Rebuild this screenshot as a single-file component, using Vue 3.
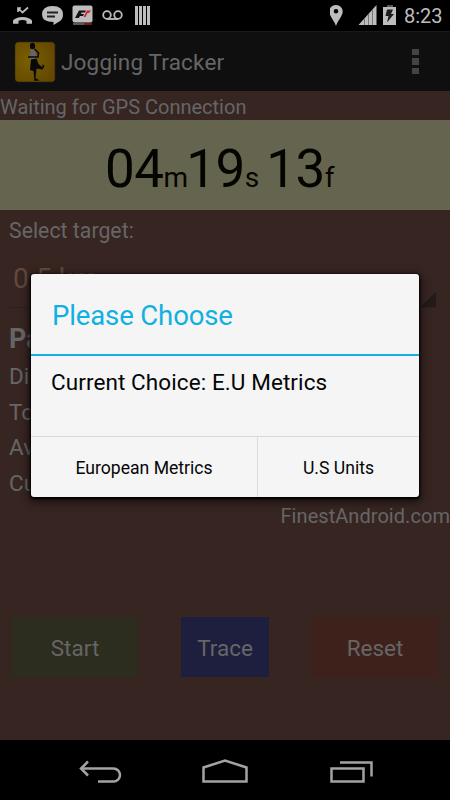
<script setup>
const stats = ['Distance', 'Total time', 'Average speed', 'Current speed']
const digits = [
  { value: '04', unit: 'm', cls: 'minutes' },
  { value: '19', unit: 's', cls: 'seconds' },
  { value: '13', unit: 'f', cls: 'fractions' },
]
</script>

<template>
  <div class="phone">
    <header class="status">
      <svg class="left-icons" width="160" height="31" viewBox="0 0 160 31">
        <g fill="#bdbdbd">
          <path d="M13 22.8V20.5Q16 17 22.500 17Q29 17 32 20.500V23.700H26.500V20.700Q22.500 19.500 18.500 20.700V23.700H13Z" />
          <path d="M42 14.500Q42 6 52.500 6Q63 6 63 14.500Q63 20 58.500 22L53.500 25V22Q42 22 42 14.500Z" />
          <rect x="72.500" y="5.500" width="20" height="17" rx="2" />
          <path d="M135 6h3v19h-3zM139 6h3v19h-3zM143 6h3v19h-3zM147 6h3v19h-3z" />
        </g>
        <path d="M18 12V8H21M18 8L22.500 12.500L28 7.500" fill="none" stroke="#bdbdbd" stroke-width="1.700" />
        <path d="M47 12.500H58M47 16.500H55" stroke="#222" stroke-width="1.800" />
        <path d="M75 18L79 10.500H86L85 12.500H81.500L81 14H84L83 16H80L78.800 18Z" fill="#111" />
        <path d="M83.500 17L87 10.500H91L89 13H87.500L85.500 17Z" fill="#d32228" />
        <path d="M73 24H84" stroke="#777" stroke-width="1.500" />
        <path d="M84 24H92" stroke="#a32020" stroke-width="1.500" />
        <g fill="none" stroke="#bdbdbd" stroke-width="1.800">
          <circle cx="107" cy="15" r="3.800" />
          <circle cx="118" cy="15" r="3.800" />
          <path d="M107 19H118" />
        </g>
      </svg>
      <div class="status-right">
        <svg width="80" height="31" viewBox="0 0 80 31">
          <path fill="#bdbdbd" fill-rule="evenodd" d="M6 5C10 5 12.700 8 12.700 11.500C12.700 16 8 20 6 26C4 20-.7 16-.7 11.500C-.7 8 2 5 6 5ZM6 9A2.300 2.300 0 1 0 6 13.600A2.300 2.300 0 1 0 6 9Z" />
          <path fill="#bdbdbd" d="M28.500 25L46.500 5V25Z" />
          <path stroke="#777" d="M34.500 18V25M38.500 14V25M42.500 10V25" />
          <path fill="#555" d="M57 5H63V7H57Z" />
          <path fill="#bdbdbd" d="M53 7H66V25H53Z" />
          <path fill="#1c1c1c" d="M57 9.500H63L61 14H64L57 22.500L58.500 16H55.500Z" />
        </svg>
        <span class="clock">8:23</span>
      </div>
    </header>

    <div class="action-bar">
      <svg class="logo" width="42" height="42" viewBox="0 0 42 42">
        <defs>
          <radialGradient id="gold" cx="35%" cy="45%" r="70%">
            <stop offset="0" stop-color="#786000" />
            <stop offset="1" stop-color="#644700" />
          </radialGradient>
        </defs>
        <rect x=".7" y=".7" width="40.600" height="40.600" rx="3.500" fill="url(#gold)" stroke="#111118" />
        <ellipse cx="18.500" cy="5" rx="2.600" ry="3.200" fill="#080808" />
        <path d="M17 8L15.500 16L17 19L23 17.500L21 9Z" fill="#666" />
        <path d="M20.500 8L24.500 12L24 16L14 16" fill="none" stroke="#080808" stroke-width="1.600" />
        <path d="M17 18.500L22.500 17.500L24.500 23L28.500 26.500L28.500 23L30.500 25L28.500 28.500L22.500 27.500L21.500 37L25.500 39.500L20.500 40L19.500 30L16 29Z" fill="#080808" />
      </svg>
      <span class="app-title">Jogging Tracker</span>
      <div class="overflow"><i></i><i></i><i></i></div>
    </div>

    <main class="screen">
      <div class="gps">Waiting for GPS Connection</div>
      <div class="timer">
        <span v-for="d in digits" :key="d.unit" :class="d.cls">{{ d.value }}<small>{{ d.unit }}</small></span>
      </div>
      <div class="label">Select target:</div>
      <div class="spinner">
        <span>0.5 km</span>
        <i class="corner"></i>
      </div>
      <div class="heading">Parameters</div>
      <div v-for="s in stats" :key="s" class="stat">{{ s }}</div>
      <div class="credit">FinestAndroid.com</div>
      <div class="buttons">
        <div class="btn start">Start</div>
        <div class="btn trace">Trace</div>
        <div class="btn reset">Reset</div>
      </div>
    </main>

    <nav class="nav">
      <svg width="450" height="60" viewBox="0 0 450 60">
        <g fill="none" stroke="#a3a3a3" stroke-width="2.500">
          <path d="M81 28.500H113.500A6.400 6.400 0 0 1 113.500 41.500H98" />
          <path d="M88 21.500L81 28.500L88 35.500" />
          <path d="M203.500 41.500V27.500L225 20.500L246.500 27.500V41.500Z" />
          <path d="M331.500 28.500H363.500V41.500H331.500Z" />
          <path d="M340 22.500H371.500V36.500" />
        </g>
      </svg>
    </nav>

    <section class="dialog">
      <h1>Please Choose</h1>
      <p>Current Choice: E.U Metrics</p>
      <div class="choices">
        <div class="choice eu">European Metrics</div>
        <div class="choice us">U.S Units</div>
      </div>
    </section>
  </div>
</template>

<style>
body { margin: 0; background: #000; }
</style>

<style scoped>
.phone {
  position: relative;
  width: 450px;
  height: 800px;
  overflow: hidden;
  display: flex;
  flex-direction: column;
  background: #000;
  color: #666;
  font-family: Roboto, "Liberation Sans", sans-serif;
  font-size: 22.5px;
  white-space: nowrap;
}
svg { display: block; }
.status { height: 31px; display: flex; justify-content: space-between; flex: none; }
.status-right { display: flex; width: 120px; }
.clock { color: #bdbdbd; font-size: 20px; line-height: 32px; margin-left: -6px; }
.action-bar {
  height: 60px;
  flex: none;
  box-sizing: border-box;
  border-top: 1px solid #191919;
  background: #0f0f0f;
  display: flex;
  align-items: center;
  padding: 0 31px 0 14px;
}
.app-title { margin-left: 5px; flex: 1; letter-spacing: .17px; }
.overflow { display: flex; flex-direction: column; gap: 3px; width: 7px; }
.overflow i { width: 7px; height: 6.500px; background: #444; }
.screen {
  height: 649px;
  flex: none;
  background: #372522;
  display: flex;
  flex-direction: column;
}
.gps { height: 29px; line-height: 32px; font-size: 20px; }
.timer {
  height: 90px;
  background: #65644f;
  color: #050500;
  font-size: 53px;
  line-height: 98px;
  font-weight: 400;
  padding-left: 105px;
  display: flex;
  letter-spacing: -.5px;
}
.timer small { font-size: 28px; letter-spacing: -1px; }
.seconds { margin-left: -1px; }
.fractions { margin-left: 8px; }
.label { height: 40px; line-height: 41px; padding-left: 9px; font-size: 21.2px; letter-spacing: .05px; }
.spinner {
  height: 57px;
  margin: 0 14px 14px 8px;
  padding-left: 5px;
  display: flex;
  justify-content: space-between;
  align-items: flex-end;
  line-height: 57px;
  font-size: 28px;
  color: #63483d;
  border-bottom: 1px solid #302020;
}
.corner { width: 15px; height: 15px; background: linear-gradient(135deg, transparent 50%, #231b19 50%); }
.heading { height: 36px; line-height: 34px; padding-left: 9px; font-weight: 700; font-size: 27px; }
.stat { height: 35.500px; line-height: 37px; padding-left: 9px; }
.credit { height: 31px; line-height: 33px; text-align: right; font-size: 20px; letter-spacing: .05px; }
.buttons { display: flex; justify-content: space-between; padding: 0 12px; margin-top: 86px; }
.btn { height: 60px; line-height: 62px; text-align: center; }
.start { width: 126px; background: #2c2d1e; }
.trace { width: 88px; background: #1e1f3e; }
.reset { width: 126px; background: #3f211b; }
.nav { height: 60px; flex: none; }
.dialog {
  position: absolute;
  left: 31px;
  top: 274px;
  width: 388px;
  height: 223px;
  border-radius: 3px;
  background: #f5f5f5;
  color: #050505;
  box-shadow: 0 1px 2px 1px #000, 0 3px 10px 2px rgba(0, 0, 0, .6);
  display: flex;
  flex-direction: column;
}
h1 {
  margin: 0;
  height: 80px;
  flex: none;
  padding-left: 21px;
  border-bottom: 2px solid #10b0e3;
  color: #10b0e3;
  font-weight: 400;
  font-size: 27.5px;
  letter-spacing: -.12px;
  line-height: 83px;
}
p { margin: 0; height: 80px; flex: none; padding-left: 20px; line-height: 53px; letter-spacing: .09px; }
.choices { height: 60px; flex: none; display: flex; border-top: 1px solid #d8d8d8; font-size: 17.600px; line-height: 62px; text-align: center; }
.choice { height: 60px; }
.eu { width: 226px; border-right: 1px solid #dedede; }
.us { flex: 1; }
</style>
